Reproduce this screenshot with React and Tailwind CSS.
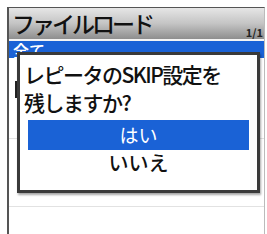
import React from 'react';

const jp = { fontFamily: '"Noto Sans CJK JP", "Noto Sans", sans-serif' };

export default function App() {
  return (
    <div className="w-[267px] h-[234px] bg-white overflow-hidden pt-[7px] pl-[7px] pr-[2px]" style={jp}>
      <div className="relative h-[240px] border-l-2 border-t border-r border-[#555] border-r-[#bbb]">
        {/* Header */}
        <div className="h-[31px] flex items-start justify-between bg-gradient-to-b from-[#e6e6e6] via-[#c4c4c4] to-[#8e8e8e] pl-[3px] pr-[1px]">
          <span className="text-[23px] leading-[30px] text-[#111] font-medium tracking-[-3px]">ファイルロード</span>
          <span className="mt-[18px] text-[11px] leading-[12px] font-bold text-[#222]">1/1</span>
        </div>
        <div className="h-[2px] bg-[#f4f4f4]" />
        {/* List */}
        <div className="h-[17px] bg-[#1a62d6] pl-[4px] text-white text-[16px] leading-[18px] font-medium">全て</div>
        <div className="h-[80px] relative">
          <div className="absolute left-[6px] top-[23px] w-[3px] h-[17px] bg-[#222]" />
        </div>
        <div className="h-px bg-[#e2e2e2]" />
        <div className="h-[67px]" />
        <div className="h-px bg-[#e2e2e2]" />

        {/* Dialog */}
        <div className="absolute left-[8px] top-[44px] w-[243px] h-[141px] bg-white border-[3px] border-[#3a3a3a] shadow-[1px_2px_2px_rgba(0,0,0,0.35)] px-[4px]">
          <p className="text-[21px] leading-[28px] text-[#111] font-medium tracking-[-1.5px] mt-[5px]">
            レピータのSKIP設定を
            <br />
            残しますか?
          </p>
          <div className="mt-[4px] mx-[4px] h-[30px] bg-[#1a62d6] text-white text-[19px] leading-[30px] text-center">はい</div>
          <div className="text-[20px] leading-[26px] text-center text-[#111] font-medium">いいえ</div>
        </div>
      </div>
    </div>
  );
}
